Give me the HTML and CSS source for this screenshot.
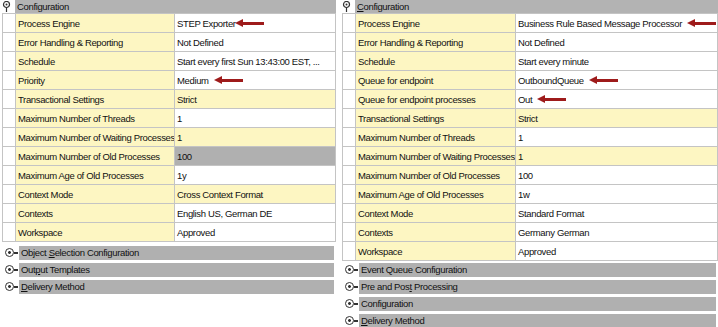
FILE: index.html
```html
<!DOCTYPE html>
<html lang="en">
<head>
  <meta charset="UTF-8" />
  <title>Configuration</title>
  <link rel="stylesheet" href="styles.css">
</head>
<body>

<div class="page">

  <!-- left: STEP Exporter -->
  <div class="panel panel-left">
    <div class="head">
      <svg class="pin" width="9" height="11" viewBox="0 0 9 11"><circle cx="4.5" cy="3.5" r="3" fill="#fff" stroke="#333" stroke-width="1.2"/><circle cx="4.5" cy="3.5" r="1" fill="#333"/><line x1="4.5" y1="6.5" x2="4.5" y2="11" stroke="#333" stroke-width="1.2"/></svg>
      <div class="bar">Configuration</div>
    </div>
    <table class="grid">
      <tr><td class="gut"></td><td class="lbl">Process Engine</td><td class="val">STEP Exporter<span class="arrow"></span></td></tr>
      <tr><td class="gut"></td><td class="lbl">Error Handling &amp; Reporting</td><td class="val">Not Defined</td></tr>
      <tr><td class="gut"></td><td class="lbl">Schedule</td><td class="val">Start every first Sun 13:43:00 EST, ...</td></tr>
      <tr><td class="gut"></td><td class="lbl">Priority</td><td class="val">Medium<span class="arrow gap"></span></td></tr>
      <tr><td class="gut"></td><td class="lbl">Transactional Settings</td><td class="val yel">Strict</td></tr>
      <tr><td class="gut"></td><td class="lbl">Maximum Number of Threads</td><td class="val">1</td></tr>
      <tr><td class="gut"></td><td class="lbl">Maximum Number of Waiting Processes</td><td class="val yel">1</td></tr>
      <tr><td class="gut"></td><td class="lbl">Maximum Number of Old Processes</td><td class="val sel">100</td></tr>
      <tr><td class="gut"></td><td class="lbl">Maximum Age of Old Processes</td><td class="val">1y</td></tr>
      <tr><td class="gut"></td><td class="lbl">Context Mode</td><td class="val yel">Cross Context Format</td></tr>
      <tr><td class="gut"></td><td class="lbl">Contexts</td><td class="val">English US, German DE</td></tr>
      <tr><td class="gut"></td><td class="lbl">Workspace</td><td class="val">Approved</td></tr>
    </table>
    <div class="sections">
      <div class="sect"><span class="knob"></span><div class="sbar">Object <u>S</u>election Configuration</div></div>
      <div class="sect"><span class="knob"></span><div class="sbar">Out<u>p</u>ut Templates</div></div>
      <div class="sect"><span class="knob"></span><div class="sbar"><u>D</u>elivery Method</div></div>
    </div>
  </div>

  <!-- right: Business Rule Based Message Processor -->
  <div class="panel panel-right">
    <div class="head">
      <svg class="pin" width="9" height="11" viewBox="0 0 9 11"><circle cx="4.5" cy="3.5" r="3" fill="#fff" stroke="#333" stroke-width="1.2"/><circle cx="4.5" cy="3.5" r="1" fill="#333"/><line x1="4.5" y1="6.5" x2="4.5" y2="11" stroke="#333" stroke-width="1.2"/></svg>
      <div class="bar"><u>C</u>onfiguration</div>
    </div>
    <table class="grid">
      <tr><td class="gut"></td><td class="lbl">Process Engine</td><td class="val">Business Rule Based Message Processor<span class="arrow gap"></span></td></tr>
      <tr><td class="gut"></td><td class="lbl">Error Handling &amp; Reporting</td><td class="val">Not Defined</td></tr>
      <tr><td class="gut"></td><td class="lbl">Schedule</td><td class="val">Start every minute</td></tr>
      <tr><td class="gut"></td><td class="lbl">Queue for endpoint</td><td class="val">OutboundQueue<span class="arrow gap"></span></td></tr>
      <tr><td class="gut"></td><td class="lbl">Queue for endpoint processes</td><td class="val">Out<span class="arrow gap"></span></td></tr>
      <tr><td class="gut"></td><td class="lbl">Transactional Settings</td><td class="val yel">Strict</td></tr>
      <tr><td class="gut"></td><td class="lbl">Maximum Number of Threads</td><td class="val">1</td></tr>
      <tr><td class="gut"></td><td class="lbl">Maximum Number of Waiting Processes</td><td class="val yel">1</td></tr>
      <tr><td class="gut"></td><td class="lbl">Maximum Number of Old Processes</td><td class="val">100</td></tr>
      <tr><td class="gut"></td><td class="lbl">Maximum Age of Old Processes</td><td class="val">1w</td></tr>
      <tr><td class="gut"></td><td class="lbl">Context Mode</td><td class="val">Standard Format</td></tr>
      <tr><td class="gut"></td><td class="lbl">Contexts</td><td class="val">Germany German</td></tr>
      <tr><td class="gut"></td><td class="lbl">Workspace</td><td class="val">Approved</td></tr>
    </table>
    <div class="sections">
      <div class="sect"><span class="knob"></span><div class="sbar">Event Queue Configuration</div></div>
      <div class="sect"><span class="knob"></span><div class="sbar">Pre and Pos<u>t</u> Processing</div></div>
      <div class="sect"><span class="knob"></span><div class="sbar">Configuration</div></div>
      <div class="sect"><span class="knob"></span><div class="sbar"><u>D</u>elivery Method</div></div>
    </div>
  </div>

</div>

</body>
</html>
```

FILE: styles.css
```css
body {
  margin: 0;
  background: #fff;
  font-family: 'Liberation Sans', Arial, sans-serif;
  font-size: 9.5px;
  letter-spacing: -0.35px;
  color: #111;
}
.page {
  display: flex;
  gap: 4px;
  width: 718px;
}
.panel-left {
  width: 336px;
}
.panel-right {
  flex: 1;
}
.head {
  display: flex;
  align-items: center;
  height: 13px;
}
.pin {
  flex: none;
  margin: 0 4px 0 2px;
}
.bar {
  flex: 1;
  height: 13px;
  line-height: 13px;
  background: #b3b3b3;
  padding-left: 2px;
}
.grid {
  border-collapse: collapse;
  table-layout: fixed;
  margin-left: 2px;
  width: calc(100% - 2px);
}
.grid td {
  height: 18px;
  padding: 0 0 0 2px;
  border: 1px solid #c4c4c4;
  white-space: nowrap;
  overflow: hidden;
}
.grid .gut {
  width: 10px;
  background: #fff;
}
.panel-left .lbl {
  width: 156px;
}
.panel-right .lbl {
  width: 157px;
}
.lbl {
  background: #fdf6c2;
  border-right-color: #b8b8b8;
}
.val {
  background: #fff;
}
.val.yel {
  background: #fdf6c2;
}
.val.sel {
  background: #b0b0b0;
}
.arrow {
  display: inline-block;
  position: relative;
  width: 24px;
  height: 3px;
  background: #9e1b1b;
  vertical-align: middle;
  margin-left: 4px;
}
.arrow.gap {
  margin-left: 10px;
}
.arrow::before {
  content: "";
  position: absolute;
  left: -5px;
  top: -3px;
  border-top: 4.5px solid transparent;
  border-bottom: 4.5px solid transparent;
  border-right: 8px solid #9e1b1b;
}
.panel-left .sections {
  padding-top: 2px;
}
.sect {
  display: flex;
  align-items: center;
  height: 17px;
}
.knob {
  flex: none;
  position: relative;
  width: 7px;
  height: 7px;
  border: 1px solid #333;
  border-radius: 50%;
  margin: 0 5px 0 5px;
  background: radial-gradient(circle, #333 1.2px, #fff 1.6px);
}
.knob::after {
  content: "";
  position: absolute;
  left: 8px;
  top: 3px;
  width: 4px;
  height: 1.5px;
  background: #333;
}
.sbar {
  flex: 1;
  height: 14px;
  line-height: 14px;
  background: #b0b0b0;
  padding-left: 2px;
  margin-right: 2px;
}
```
